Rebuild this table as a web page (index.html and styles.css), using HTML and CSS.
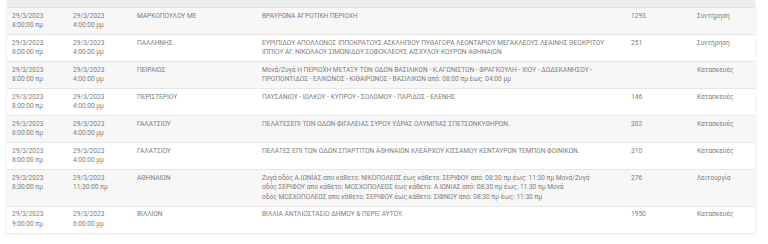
FILE: index.html
```html
<!DOCTYPE html>
<html lang="el">
<head>
<meta charset="utf-8">
<link rel="stylesheet" href="styles.css">
</head>
<body>
<div class="card">
<table class="grid">
<colgroup>
<col class="c1"><col class="c2"><col class="c3"><col class="c4"><col class="c5"><col class="c6">
</colgroup>
<thead><tr class="head"><th></th><th></th><th></th><th></th><th></th><th></th></tr></thead>
<tbody>
<tr><td>29/3/2023<br>8:00:00 πμ</td><td>29/3/2023<br>4:00:00 μμ</td><td>ΜΑΡΚΟΠΟΥΛΟΥ ΜΕ</td><td>ΒΡΑΥΡΩΝΑ ΑΓΡΟΤΙΚΗ ΠΕΡΙΟΧΗ</td><td>1293</td><td>Συντήρηση</td></tr>
<tr><td>29/3/2023<br>8:00:00 πμ</td><td>29/3/2023<br>4:00:00 μμ</td><td>ΠΑΛΛΗΝΗΣ</td><td>ΕΥΡΙΠΙΔΟΥ ΑΠΟΛΛΩΝΟΣ ΙΠΠΟΚΡΑΤΟΥΣ ΑΣΚΛΗΠΙΟΥ ΠΥΘΑΓΟΡΑ ΛΕΟΝΤΑΡΙΟΥ ΜΕΓΑΚΛΕΟΥΣ ΛΕΑΙΝΗΣ ΘΕΟΚΡΙΤΟΥ<br>ΙΠΠΙΟΥ ΑΓ. ΝΙΚΟΛΑΟΥ ΣΙΜΩΝΙΔΟΥ ΣΟΦΟΚΛΕΟΥΣ ΑΙΣΧΥΛΟΥ ΚΟΥΡΩΝ ΑΘΗΝΑΙΩΝ</td><td>251</td><td>Συντήρηση</td></tr>
<tr><td>29/3/2023<br>8:00:00 πμ</td><td>29/3/2023<br>4:00:00 μμ</td><td>ΠΕΙΡΑΙΩΣ</td><td>Μονά/Ζυγά Η ΠΕΡΙΟΧΗ ΜΕΤΑΞΥ ΤΩΝ ΟΔΩΝ ΒΑΣΙΛΙΚΩΝ - Κ.ΑΓΩΝΙΣΤΩΝ - ΦΡΑΓΚΟΥΛΗ - ΧΙΟΥ - ΔΩΔΕΚΑΝΗΣΟΥ -<br>ΠΡΟΠΟΝΤΙΔΟΣ - ΕΛΙΚΩΝΟΣ - ΚΙΘΑΙΡΩΝΟΣ - ΒΑΣΙΛΙΚΩΝ από: 08:00 πμ έως: 04:00 μμ</td><td></td><td>Κατασκευές</td></tr>
<tr><td>29/3/2023<br>8:00:00 πμ</td><td>29/3/2023<br>4:00:00 μμ</td><td>ΠΕΡΙΣΤΕΡΙΟΥ</td><td>ΠΑΥΣΑΝΙΟΥ - ΙΩΛΚΟΥ - ΚΥΠΡΟΥ - ΣΟΛΩΜΟΥ - ΠΑΡΙΔΟΣ - ΕΛΕΝΗΣ</td><td>146</td><td>Κατασκευές</td></tr>
<tr><td>29/3/2023<br>8:00:00 πμ</td><td>29/3/2023<br>4:00:00 μμ</td><td>ΓΑΛΑΤΣΙΟΥ</td><td>ΠΕΛΑΤΕΣΕΠΙ ΤΩΝ ΟΔΩΝ ΦΙΓΑΛΕΙΑΣ ΣΥΡΟΥ ΥΔΡΑΣ ΟΛΥΜΠΙΑΣ ΣΠΕΤΣΩΝΚΥΘΗΡΩΝ.</td><td>302</td><td>Κατασκευές</td></tr>
<tr><td>29/3/2023<br>8:00:00 πμ</td><td>29/3/2023<br>4:00:00 μμ</td><td>ΓΑΛΑΤΣΙΟΥ</td><td>ΠΕΛΑΤΕΣ ΕΠΙ ΤΩΝ ΟΔΩΝ ΣΠΑΡΤΙΤΩΝ ΑΘΗΝΑΙΩΝ ΚΛΕΑΡΧΟΥ ΚΙΣΣΑΜΟΥ ΚΕΝΤΑΥΡΩΝ ΤΕΜΠΩΝ ΦΟΙΝΙΚΩΝ.</td><td>310</td><td>Κατασκευές</td></tr>
<tr><td>29/3/2023<br>8:30:00 πμ</td><td>29/3/2023<br>11:30:00 πμ</td><td>ΑΘΗΝΑΙΩΝ</td><td>Ζυγά οδός Α.ΙΩΝΙΑΣ απο κάθετο: ΝΙΚΟΠΟΛΕΩΣ έως κάθετο: ΣΕΡΙΦΟΥ από: 08:30 πμ έως: 11:30 πμ Μονά/Ζυγά<br>οδός ΣΕΡΙΦΟΥ απο κάθετο: ΜΟΣΧΟΠΟΛΕΩΣ έως κάθετο: Α.ΙΩΝΙΑΣ από: 08:30 πμ έως: 11:30 πμ Μονά<br>οδός ΜΟΣΧΟΠΟΛΕΩΣ απο κάθετο: ΣΕΡΙΦΟΥ έως κάθετο: ΣΙΦΝΟΥ από: 08:30 πμ έως: 11:30 πμ</td><td>276</td><td>Λειτουργία</td></tr>
<tr><td>29/3/2023<br>9:00:00 πμ</td><td>29/3/2023<br>6:00:00 μμ</td><td>ΒΙΛΛΙΩΝ</td><td>ΒΙΛΛΙΑ ΑΝΤΛΙΟΣΤΑΣΙΟ ΔΗΜΟΥ &amp; ΠΕΡΙΞ ΑΥΤΟΥ.</td><td>1950</td><td>Κατασκευές</td></tr>
</tbody>
</table>
</div>
</body>
</html>
```

FILE: styles.css
```css
html, body {
  margin: 0;
  padding: 0;
  background: #ffffff;
}
body {
  font-family: Roboto, "Noto Sans", sans-serif;
  font-size: 6.6px;
  color: #7d7d7d;
}
.card {
  margin: 0 13px 8px 7px;
  background: #fff;
  box-shadow: 0 1px 3px rgba(0, 0, 0, 0.12);
}
.grid {
  width: 100%;
  border-collapse: collapse;
  table-layout: fixed;
}
.c1 { width: 61px; }
.c2 { width: 64px; }
.c3 { width: 125px; }
.c4 { width: 369px; }
.c5 { width: 66px; }
.c6 { width: auto; }
.head th {
  height: 7px;
  padding: 0;
  background: #ededed;
  border-bottom: 1px solid #e2e2e2;
}
.grid td {
  padding: 3.5px 5px 3.5px 5px;
  line-height: 9.5px;
  vertical-align: top;
  border-bottom: 1px solid #e6e6e6;
}
.grid td:nth-child(4) {
  white-space: nowrap;
  overflow: hidden;
}
.grid tbody tr:nth-child(odd) td {
  background: #f7f7f7;
}
.grid tbody tr:last-child td {
  border-bottom: none;
}
```
